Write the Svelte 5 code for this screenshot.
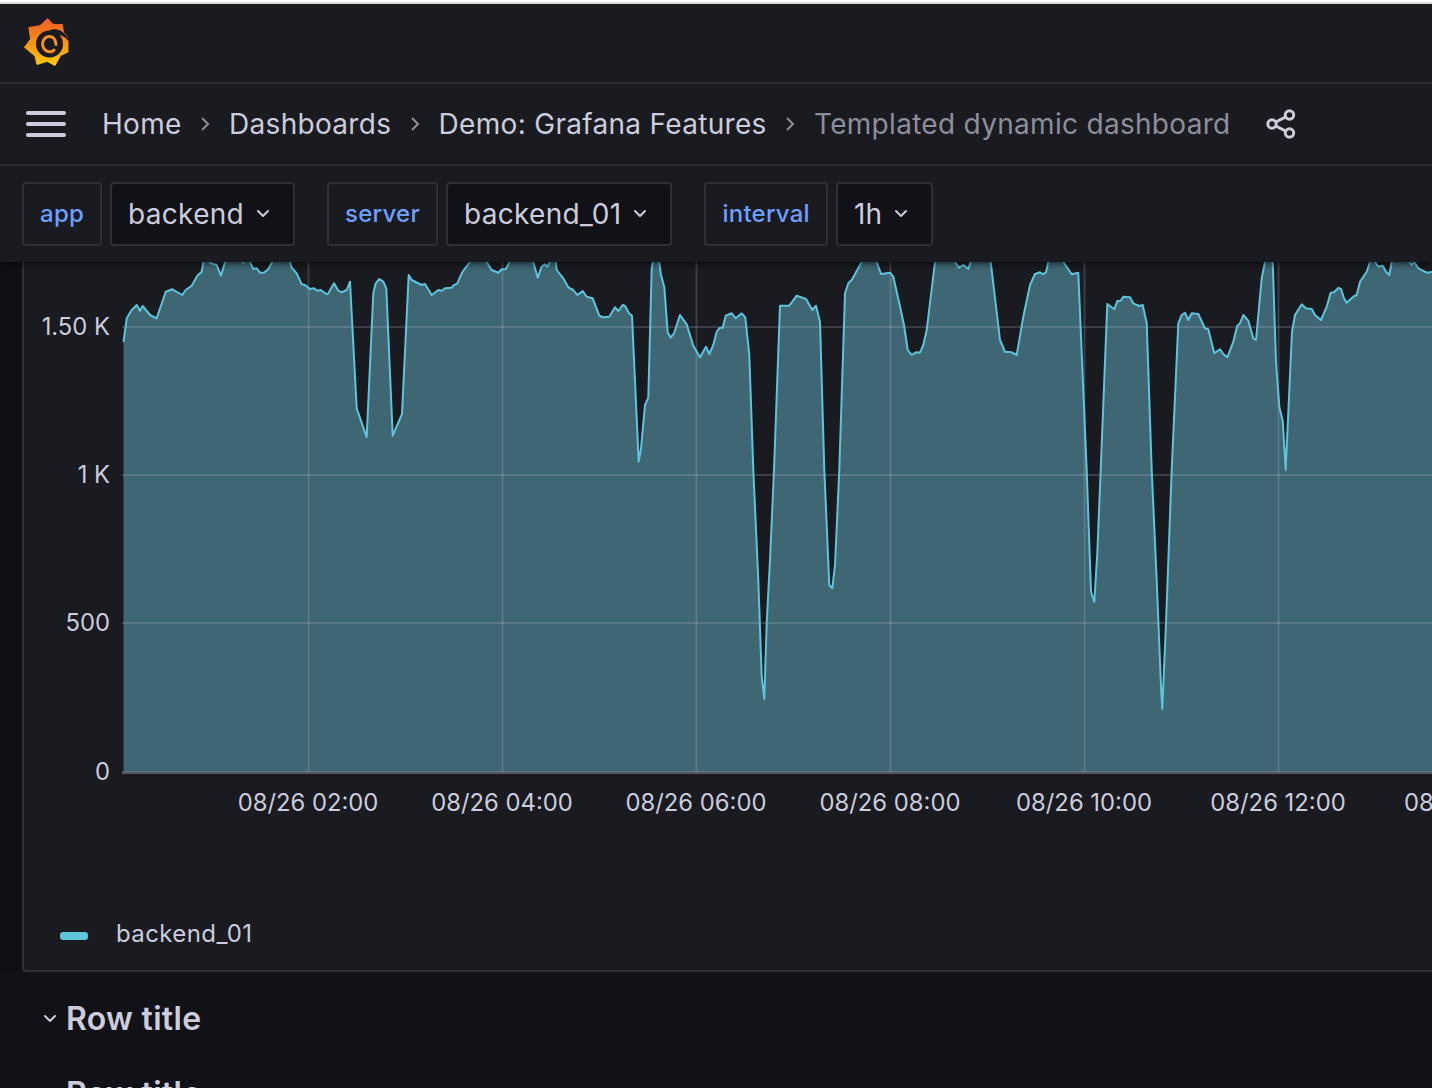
<script>
  const raw = `123.5,342 126.7,318.3 131.7,310 136.7,305 140,310.7 142.7,306 150,315 156.7,318.3 165.7,291.7 172.3,289.3 182.3,295 185.7,290 191.7,285.7 197.3,275.7 201.7,271.7 203.3,262 210,263 216.7,265 221,275.7 225,262 243.3,263 250,262 253.3,269 256.7,268.3 260,272.7 264,272.7 268.3,269 272.3,262 290,262 291.7,267.7 296.7,273.3 301.7,284.3 305,285 310,289 314,288.3 317.3,290.7 320.7,290 326.7,294.3 328.3,293.3 334,283.3 338.3,290.7 341.7,292.3 346.7,290 350,281.7 356.7,408.3 366.7,437.3 373.3,293.3 375.7,283.3 379.3,279 383.3,281.7 386.3,288.3 392.7,435.7 402,414 408.7,275 411.7,280 421.7,285 425,284 431.7,295 438.3,290 441.7,290.7 445,288.3 451.7,287.7 453.3,285.7 457.3,283.3 461.7,273.3 465,268.3 470,262 486.7,262 491.7,270 498.3,272.7 501.7,269.3 505.7,269.3 509,263 533.3,262 537.7,277.7 541.7,266.7 545,264.3 547.3,266.7 550,262 555.7,262 556.7,270 563.3,278.3 568.3,287.3 573.3,290 577.3,295 582.7,291 586.7,296.7 592.7,298.3 599.3,315.7 603.3,317.3 609.3,316.7 615,307.3 618.3,311 622.7,305 625,305.7 629,313.3 632,315.7 638.7,461.7 641,448.3 645,405 648.3,397.7 651.7,268.3 652.7,262 659.3,262 661,275 664.3,287.3 667.7,332.3 670.7,337.7 674,333.3 680,315 686.7,324.3 693.3,345.7 700,357.3 706,346.7 709.3,354 713.3,345 716.7,331.7 720,327.7 722.7,327.7 725.7,315.7 731.7,313.3 735.7,318.3 741.7,313.3 745.3,317.3 749.3,355 753.3,470 758.3,580 761.7,676.7 764.3,699 766.7,623 770,560 774,470 780,305.7 789.3,305.7 796.7,295.7 806,299 812.3,310 816,305.7 820,321.7 824.3,470 829.3,585 832.3,588.3 835,565 839.3,470 845,293.3 848.3,283.3 851.7,280 861.7,262 876.7,262 881,274 890,272.7 893.3,276.7 899,301.7 904,325 907.7,350 911.7,355 916,352.3 920,352.7 923.3,345 926.7,330 935,262 955,262 959,267.7 963.3,265 968.3,269 970.7,262 990.7,262 1000,340 1005,351.7 1011.7,352.3 1016.7,355 1023.3,316.7 1030,285 1035,274 1040,272.3 1043.3,274.3 1046,272.3 1048.3,262 1063.3,262 1071.7,274.3 1078.3,272.7 1086.7,470 1091,591.7 1094.3,601.7 1097.3,553.3 1100.7,470 1107.3,304 1114.3,309.3 1117.3,301 1120.7,300.7 1123.3,296.7 1130,297.3 1133.3,303.3 1139.3,306 1142.7,305 1146.7,323.3 1151.7,470 1156.7,580 1161,686.7 1162.3,709 1166,623.3 1171.7,470 1178.3,323.3 1181.7,315 1185,312.7 1188.3,320 1191.7,313.3 1198.3,314 1205,328.3 1208.3,329.3 1214.3,353.3 1220,349.3 1223.3,354 1227.3,357.3 1233.3,341.7 1237.3,325.7 1240,323.3 1243.3,315 1248.3,320.7 1253.3,338.3 1256,340 1261.7,278.3 1265,262 1272.7,262 1276,361.7 1279.3,406.7 1282.7,420.7 1285.7,470 1292,331.7 1295,315 1301.7,304.3 1305.7,308.3 1311.7,309 1315,315 1321,320 1326.7,306.7 1330.7,292.7 1334,292.3 1338.3,288 1341,289 1344,298.3 1346.7,302.7 1353.3,296.7 1356.7,295 1360,281.7 1366.7,271.7 1370,262 1375,262 1378.3,266.7 1382.7,265.7 1386,271.7 1389.3,275 1391.7,262 1410,262 1411.7,265 1414.3,262 1418.3,268.3 1426.7,272.7 1434,271.7`;
  const pts = raw.split(' ').map((p) => p.split(',').map(Number));
  const out = [];
  pts.forEach((p, i) => {
    out.push(p);
    const n = pts[i + 1];
    if (n && p[1] <= 263 && n[1] <= 263) out.push([(p[0] + n[0]) / 2, 240]);
  });
  const line = out.map((p) => p.join(',')).join(' ');
  const area = `123.5,772 ${line} 1434,772`;

  const crumbs = ['Home', 'Dashboards', 'Demo: Grafana Features'];
  const filters = [
    { label: 'app', value: 'backend' },
    { label: 'server', value: 'backend_01' },
    { label: 'interval', value: '1h' }
  ];
  const yAxis = [
    { y: 327, text: '1.50 K' },
    { y: 475, text: '1 K' },
    { y: 623, text: '500' },
    { y: 772, text: '0' }
  ];
  const xAxis = [
    { x: 309, text: '08/26 02:00' },
    { x: 503, text: '08/26 04:00' },
    { x: 697, text: '08/26 06:00' },
    { x: 891, text: '08/26 08:00' },
    { x: 1085, text: '08/26 10:00' },
    { x: 1279, text: '08/26 12:00' }
  ];
</script>

<div class="page">
  <div class="strip"></div>
  <header class="topbar">
    <svg class="logo" viewBox="24 19 45 48" width="45" height="48" aria-label="Grafana">
      <defs>
        <linearGradient id="lg" x1="0" y1="0" x2="0" y2="1">
          <stop offset="0" stop-color="#f05a28" />
          <stop offset="1" stop-color="#fbca0a" />
        </linearGradient>
      </defs>
      <path fill="url(#lg)" stroke="url(#lg)" stroke-width="1" stroke-linejoin="round" d="M47.7 19.5 L52 24.5 L55 25.7 L62.5 25.5 L63.3 33 L67 38 L68 43 L68 53 L60.5 56.5 L55 66.5 L47 62.3 L37 65.5 L35 57 L24.5 48.3 L30.7 40 L28.8 28.5 L40 26.7 Z" />
      <circle cx="49.5" cy="45" r="13.5" fill="#191b20" />
      <path fill="#191b20" d="M50 31 C58 28 66 33 69.5 43 C65 37 58 34 50 36 Z" />
      <path fill="none" stroke="#f7901e" stroke-width="3" stroke-linecap="round" d="M56 45.5 C56 40 52.5 37 48.5 37.5 C44.5 38 42 42 42.7 46.5 C43.5 51 47.5 53.3 51 52.7 C52.3 52.4 53.4 51.8 54 51" />
    </svg>
  </header>

  <nav class="crumbs">
    <span class="burger"><i></i><i></i><i></i></span>
    <div class="trail">
      {#each crumbs as c}
        <span class="crumb">{c}</span>
        <svg class="sep" viewBox="0 0 10 16" width="10" height="16"><path d="M2 2 L8 8 L2 14" fill="none" stroke="#8e8e9a" stroke-width="2" /></svg>
      {/each}
      <span class="crumb last">Templated dynamic dashboard</span>
    </div>
    <svg class="share" viewBox="0 0 32 32" width="32" height="32" fill="none" stroke="#ccccdc" stroke-width="3">
      <circle cx="7" cy="16" r="4.2" />
      <circle cx="24.5" cy="7" r="4.2" />
      <circle cx="24.5" cy="25" r="4.2" />
      <path d="M10.8 14 L20.8 8.9 M10.8 18 L20.8 23.1" />
    </svg>
  </nav>

  <section class="filters">
    {#each filters as f}
      <div class="pair">
        <span class="label">{f.label}</span>
        <span class="value">{f.value}
          <svg viewBox="0 0 14 10" width="14" height="10"><path d="M2 2 L7 7 L12 2" fill="none" stroke="#ccccdc" stroke-width="2" stroke-linecap="round" stroke-linejoin="round" /></svg>
        </span>
      </div>
    {/each}
  </section>

  <main class="content">
    <section class="panel">
      <svg class="chart" viewBox="24 262 1408 620" width="1408" height="620">
        <polygon points={area} fill="#3e6673" />
        {#each yAxis as t}
          <line x1="122" x2="1432" y1={t.y} y2={t.y} class="grid" />
          <text x="110" y={t.y + 8} text-anchor="end" class="tick">{t.text}</text>
        {/each}
        {#each xAxis as t}
          <line x1={t.x - 0.5} x2={t.x - 0.5} y1="262" y2="772" class="grid" />
          <text x={t.x - 1} y="811" text-anchor="middle" class="tick">{t.text}</text>
        {/each}
        <text x="1404" y="811" class="tick">08/26 14:00</text>
        <polyline points={line} fill="none" stroke="#5ec4dc" stroke-width="2" stroke-linejoin="round" />
        <line x1="122" x2="1432" y1="773" y2="773" stroke="#55585e" stroke-width="2" />
      </svg>
      <div class="legend">
        <span class="pill"></span>
        <span>backend_01</span>
      </div>
    </section>

    <div class="row">
      <svg viewBox="0 0 14 10" width="14" height="10"><path d="M2 2 L7 7 L12 2" fill="none" stroke="#ccccdc" stroke-width="2" stroke-linecap="round" stroke-linejoin="round" /></svg>
      <span>Row title</span>
    </div>
    <div class="row second"><span>Row title</span></div>
  </main>
</div>

<style>
  :global(body) {
    margin: 0;
    background: #111217;
    overflow: hidden;
  }
  .page {
    height: 1088px;
    overflow: hidden;
    font-family: Inter, "Liberation Sans", sans-serif;
    color: #ccccdc;
    display: flex;
    flex-direction: column;
  }
  .strip {
    height: 2px;
    flex: none;
    background: #fff;
    border-bottom: 2px solid #d9d9d9;
  }
  .topbar {
    flex: none;
    box-sizing: border-box;
    background: #191b20;
    border-bottom: 2px solid #2c2e33;
    height: 80px;
    display: flex;
    align-items: center;
    padding: 0 0 2px 24px;
  }
  .logo {
    display: block;
  }
  .crumbs {
    flex: none;
    height: 82px;
    box-sizing: border-box;
    background: #191b20;
    border-bottom: 2px solid #2c2e33;
    display: flex;
    align-items: center;
    padding-left: 26px;
  }
  .burger {
    display: flex;
    flex-direction: column;
    gap: 7.5px;
    width: 40px;
  }
  .burger i {
    display: block;
    height: 3.5px;
    border-radius: 2px;
    background: #ccccdc;
  }
  .trail {
    display: flex;
    align-items: center;
    margin-left: 36px;
    gap: 18.7px;
    font-size: 28px;
    letter-spacing: 0.3px;
  }
  .crumb {
    white-space: nowrap;
  }
  .crumb.last {
    color: #8e8e9a;
  }
  .sep {
    display: block;
  }
  .share {
    margin-left: 34px;
  }
  .filters {
    flex: none;
    height: 96px;
    box-sizing: border-box;
    background: #191b20;
    box-shadow: 0 2px 6px rgba(0, 0, 0, 0.6);
    position: relative;
    z-index: 2;
    display: flex;
    align-items: flex-start;
    gap: 32px;
    padding: 16px 0 0 22px;
  }
  .pair {
    display: flex;
    gap: 8px;
  }
  .label,
  .value {
    height: 64px;
    box-sizing: border-box;
    border: 2px solid #2e3036;
    border-radius: 4px;
    display: flex;
    align-items: center;
    padding: 0 16px;
    white-space: nowrap;
  }
  .label {
    font-size: 24px;
    font-weight: 500;
    letter-spacing: 0.25px;
    padding-bottom: 2px;
    color: #6e9fff;
  }
  .value {
    background: #111217;
    font-size: 28px;
    letter-spacing: 0.3px;
    padding: 0 23px 0 16px;
    gap: 12px;
  }
  .content {
    flex: 1;
    padding-left: 22px;
    min-height: 0;
  }
  .panel {
    background: #191b20;
    border-left: 2px solid #2e3036;
    border-bottom: 2px solid #2e3036;
    border-bottom-left-radius: 4px;
    box-shadow: -22px 0 0 #0f1014;
    height: 710px;
    box-sizing: border-box;
    display: flex;
    flex-direction: column;
  }
  .chart {
    display: block;
    flex: none;
  }
  .grid {
    stroke: rgba(204, 204, 220, 0.2);
    stroke-width: 2;
  }
  .tick {
    font-size: 23.8px;
    fill: #ccccdc;
  }
  .legend {
    display: flex;
    align-items: center;
    gap: 28px;
    margin: 37px 0 0 36px;
    font-size: 24px;
    letter-spacing: 0.4px;
    line-height: 30px;
  }
  .pill {
    width: 28px;
    height: 8px;
    border-radius: 3px;
    background: #5ec4dc;
    position: relative;
    top: 2px;
  }
  .row {
    display: flex;
    align-items: center;
    gap: 9px;
    margin: 28px 0 0 21px;
    font-size: 32px;
    font-weight: 600;
    letter-spacing: 0.3px;
    line-height: 38px;
  }
  .row.second {
    margin: 37px 0 0 44px;
  }
</style>
